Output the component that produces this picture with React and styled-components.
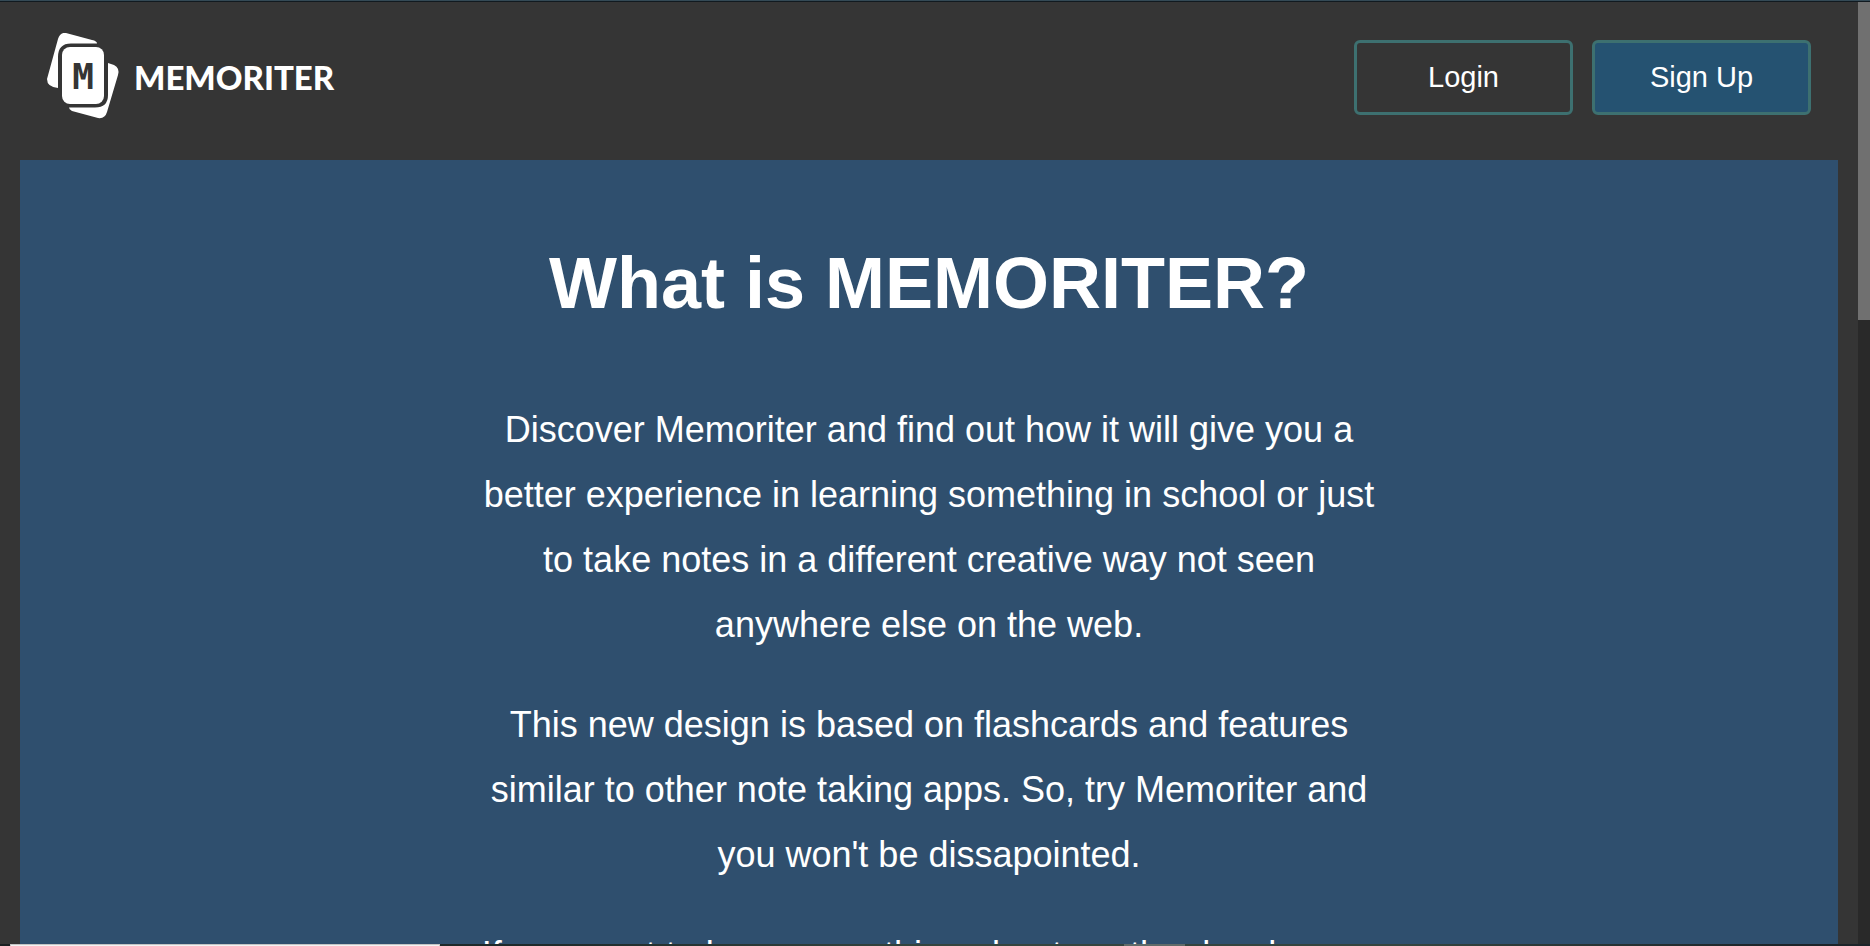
import React from "react";
import styled, { createGlobalStyle } from "styled-components";

const GlobalStyle = createGlobalStyle`
  * { box-sizing: border-box; }
  html, body, #root { height: 100%; }
  body {
    margin: 0;
    overflow: hidden;
    background: #353535;
    color: #fff;
    font-family: "Liberation Sans", Arial, sans-serif;
  }
`;

const Shell = styled.div`
  display: flex;
  flex-direction: column;
  height: 100vh;
`;

const TopEdge = styled.div`
  flex: none;
  height: 2px;
  background: #111a20;
  border-top: 1px solid #344a56;
`;

const Viewport = styled.div`
  flex: 1;
  min-height: 0;
  display: flex;
`;

const Page = styled.div`
  flex: 1;
  min-width: 0;
  overflow: hidden;
`;

const ScrollTrack = styled.div`
  flex: none;
  width: 12px;
  background: #292929;
`;

const ScrollThumb = styled.div`
  height: 318px;
  background: #707070;
`;

const Header = styled.header`
  display: flex;
  justify-content: space-between;
  align-items: flex-start;
  height: 158px;
  padding: 31px 47px 0;
`;

const Brand = styled.a`
  display: flex;
  align-items: center;
  gap: 14px;
  color: #fff;
  text-decoration: none;
`;

const Wordmark = styled.span`
  font: 900 33px/40px Lato, sans-serif;
`;

const Actions = styled.nav`
  display: flex;
  gap: 19px;
  padding-top: 7px;
`;

const Button = styled.button`
  width: 219px;
  height: 75px;
  padding: 0;
  border: 3px solid #3d7070;
  border-radius: 6px;
  background: ${(p) => (p.$filled ? "#255271" : "transparent")};
  color: #fff;
  font: 29px/33px "Liberation Sans", Arial, sans-serif;
  cursor: pointer;
`;

const Hero = styled.main`
  margin: 0 20px;
  padding: 82px 20px;
  min-height: 100%;
  background: #2f4f6e;
  text-align: center;
`;

const Title = styled.h1`
  margin: 0 0 73px;
  font-size: 72px;
  line-height: 82px;
`;

const Copy = styled.p`
  max-width: 900px;
  margin: 0 auto 35px;
  font-size: 36px;
  line-height: 65px;
`;

const BottomEdge = styled.div`
  flex: none;
  display: flex;
  height: 2px;
  padding-left: 10px;
  background: linear-gradient(90deg, #1a2022, #1f2b2b 30%, #34453f 50%, #34453f 75%, #1d2429 95%);
`;

const StatusBox = styled.div`
  width: 430px;
  border: 1px solid #c4c4c4;
  border-bottom: 0;
  background: #f2f2f2;
`;

const TaskHighlight = styled.div`
  width: 61px;
  margin-left: 684px;
  background: #606b69;
`;

function Logo() {
  return (
    <svg width="73" height="87" viewBox="0 0 73 87" fill="#fff" aria-hidden="true">
      <path d="M19 0 L45 7 Q50 8 50 10.500 H24 Q11 10.500 11 24 V55 Q0 54 0 46 L11 6 Q13 -1 19 0Z" />
      <path d="M61 30 L67 32 Q73 35 71 42 L60 79 Q58 86 51 85 L25 78 Q22 76 22 74.500 H48 Q61 74.500 61 62Z" />
      <rect x="15" y="14" width="42" height="57" rx="8" />
      <text x="36" y="56" textAnchor="middle" fill="#353535" fontFamily="'DejaVu Sans Mono', monospace" fontWeight="700" fontSize="36">M</text>
    </svg>
  );
}

export default function App() {
  return (
    <Shell>
      <GlobalStyle />
      <TopEdge />
      <Viewport>
        <Page>
          <Header>
            <Brand href="#">
              <Logo />
              <Wordmark>MEMORITER</Wordmark>
            </Brand>
            <Actions>
              <Button type="button">Login</Button>
              <Button type="button" $filled>Sign Up</Button>
            </Actions>
          </Header>
          <Hero>
            <Title>What is MEMORITER?</Title>
            <Copy>
              Discover Memoriter and find out how it will give you a better experience in learning
              something in school or just to take notes in a different creative way not seen
              anywhere else on the web.
            </Copy>
            <Copy>
              This new design is based on flashcards and features similar to other note taking
              apps. So, try Memoriter and you won't be dissapointed.
            </Copy>
            <Copy>If you want to learn something about us, the developers,</Copy>
          </Hero>
        </Page>
        <ScrollTrack>
          <ScrollThumb />
        </ScrollTrack>
      </Viewport>
      <BottomEdge>
        <StatusBox />
        <TaskHighlight />
      </BottomEdge>
    </Shell>
  );
}
